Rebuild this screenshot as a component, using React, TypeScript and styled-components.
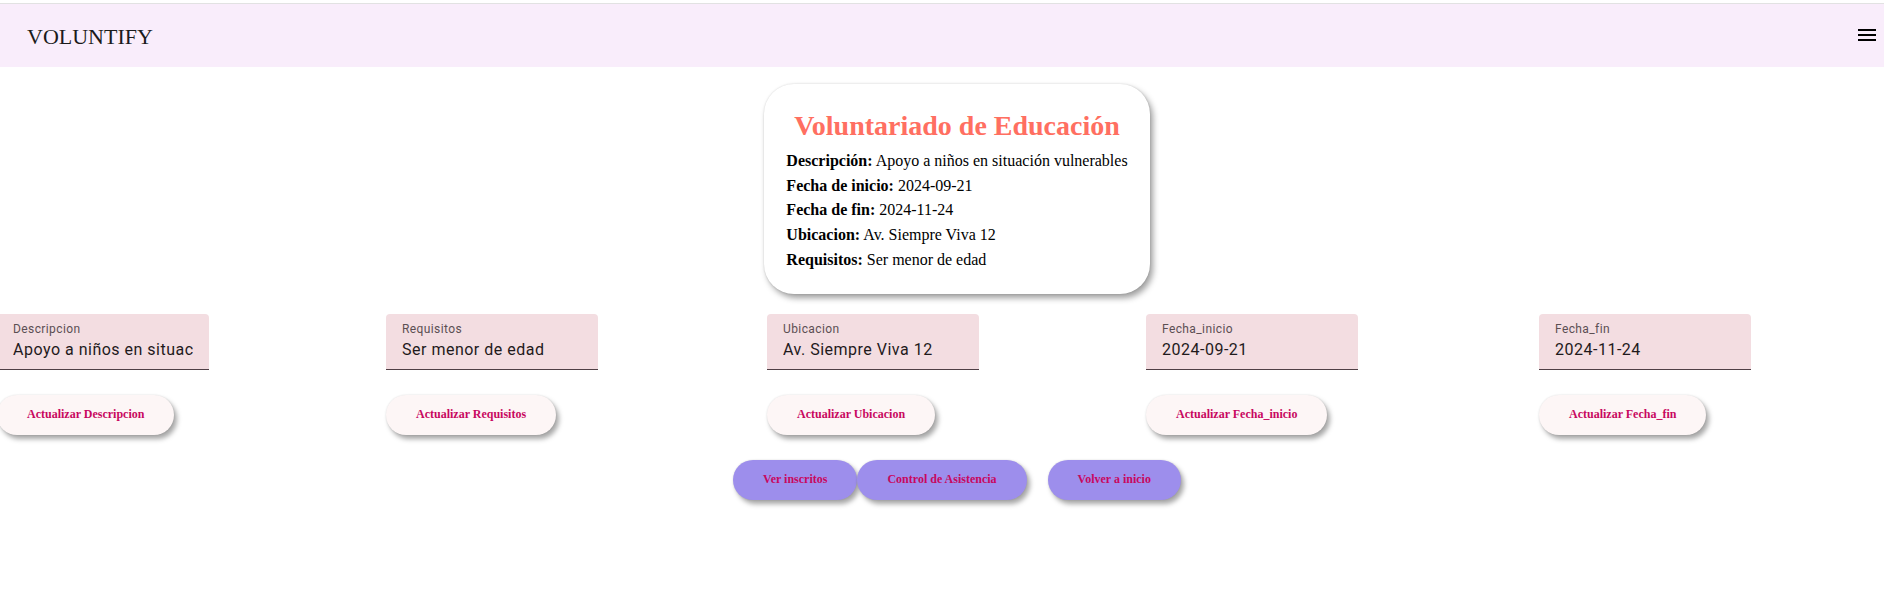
import React from "react";
import styled, { createGlobalStyle } from "styled-components";

const Global = createGlobalStyle`
  html, body { margin: 0; padding: 0; background: #ffffff; }
  body { font-family: "Liberation Serif", "Times New Roman", serif; overflow: hidden; }
  * { box-sizing: border-box; }
`;

const Page = styled.div`
  width: 1884px;
  min-height: 613px;
  padding-top: 3px;
`;

const Header = styled.header`
  height: 64px;
  border-top: 1px solid #e2e2e2;
  background: #f9edfb;
  display: flex;
  align-items: center;
  justify-content: space-between;
  padding: 0 5px 0 27px;
`;

const Brand = styled.div`
  font-family: "Liberation Serif", "Times New Roman", serif;
  font-size: 22px;
  color: #1b1b1b;
  margin-top: 2px;
`;

const MenuButton = styled.button`
  border: none;
  background: transparent;
  padding: 0;
  width: 24px;
  height: 24px;
  display: flex;
  align-items: center;
  justify-content: center;
  margin-top: -2px;
  cursor: pointer;
`;

const Centered = styled.div`
  display: flex;
  justify-content: center;
  padding-left: 30px;
`;

const Card = styled.section`
  margin-top: 17px;
  background: #ffffff;
  border-radius: 30px;
  padding: 26px 22px 21px;
  box-shadow: 3px 4px 6px rgba(0, 0, 0, 0.38), 0 0 2px rgba(0, 0, 0, 0.15);
`;

const Title = styled.h2`
  margin: 0 0 7px;
  font-size: 28px;
  line-height: 32px;
  font-weight: bold;
  color: #ff6f61;
  text-align: center;
  white-space: nowrap;
`;

const InfoLine = styled.p`
  margin: 0;
  font-size: 16px;
  line-height: 24.7px;
  color: #000;
  white-space: nowrap;
  b { font-weight: bold; }
`;

const FieldRow = styled.div`
  display: grid;
  grid-template-columns: 389px 381px 379px 393px 1fr;
  margin-top: 20px;
  margin-left: -3px;
`;

const FieldColumn = styled.div`
  display: flex;
  flex-direction: column;
  align-items: flex-start;
  gap: 25px;
`;

const Field = styled.label`
  position: relative;
  display: block;
  width: 212px;
  height: 56px;
  background: #f3dde1;
  border-radius: 4px 4px 0 0;
  border-bottom: 1px solid #4f3f45;
`;

const FieldLabel = styled.span`
  position: absolute;
  left: 16px;
  top: 7px;
  font-family: Roboto, "Liberation Sans", sans-serif;
  font-size: 12px;
  line-height: 17px;
  letter-spacing: 0.4px;
  color: #5b4f53;
`;

const FieldInput = styled.input`
  display: block;
  width: 100%;
  height: 55px;
  border: none;
  outline: none;
  background: transparent;
  padding: 25px 16px 8px 16px;
  font-family: Roboto, "Liberation Sans", sans-serif;
  font-size: 16px;
  line-height: 23px;
  letter-spacing: 0.5px;
  color: #1f1a1c;
`;

const PillButton = styled.button<{ $variant?: "light" | "purple" }>`
  height: 40px;
  padding: 0 30px;
  border: none;
  border-radius: 20px;
  background: ${(p) => (p.$variant === "purple" ? "#9d8eec" : "#fdf6f6")};
  color: #c8085f;
  font-family: "Liberation Serif", "Times New Roman", serif;
  font-weight: bold;
  font-size: 12px;
  white-space: nowrap;
  box-shadow: 3px 4px 5px rgba(0, 0, 0, 0.35), 0 0 2px rgba(0, 0, 0, 0.12);
  cursor: pointer;
`;

const ActionBar = styled.div`
  display: flex;
  align-items: center;
  margin-top: 25px;
`;

const Spacer = styled.div`
  width: 21px;
`;

const MenuIcon = () => (
  <svg width="24" height="24" viewBox="0 0 24 24" aria-hidden="true">
    <path d="M3 18h18v-2H3zm0-5h18v-2H3zm0-7v2h18V6z" fill="#000" />
  </svg>
);

const fields = [
  { label: "Descripcion", value: "Apoyo a niños en situación vulnerables" },
  { label: "Requisitos", value: "Ser menor de edad" },
  { label: "Ubicacion", value: "Av. Siempre Viva 12" },
  { label: "Fecha_inicio", value: "2024-09-21" },
  { label: "Fecha_fin", value: "2024-11-24" },
];

export default function App() {
  return (
    <Page>
      <Global />
      <Header>
        <Brand>VOLUNTIFY</Brand>
        <MenuButton aria-label="menu">
          <MenuIcon />
        </MenuButton>
      </Header>

      <Centered>
        <Card>
          <Title>Voluntariado de Educación</Title>
          <InfoLine>
            <b>Descripción:</b> Apoyo a niños en situación vulnerables
          </InfoLine>
          <InfoLine>
            <b>Fecha de inicio:</b> 2024-09-21
          </InfoLine>
          <InfoLine>
            <b>Fecha de fin:</b> 2024-11-24
          </InfoLine>
          <InfoLine>
            <b>Ubicacion:</b> Av. Siempre Viva 12
          </InfoLine>
          <InfoLine>
            <b>Requisitos:</b> Ser menor de edad
          </InfoLine>
        </Card>
      </Centered>

      <FieldRow>
        {fields.map((f) => (
          <FieldColumn key={f.label}>
            <Field>
              <FieldLabel>{f.label}</FieldLabel>
              <FieldInput defaultValue={f.value} />
            </Field>
            <PillButton $variant="light">Actualizar {f.label}</PillButton>
          </FieldColumn>
        ))}
      </FieldRow>

      <Centered>
        <ActionBar>
          <PillButton $variant="purple">Ver inscritos</PillButton>
          <PillButton $variant="purple">Control de Asistencia</PillButton>
          <Spacer />
          <PillButton $variant="purple">Volver a inicio</PillButton>
        </ActionBar>
      </Centered>
    </Page>
  );
}
